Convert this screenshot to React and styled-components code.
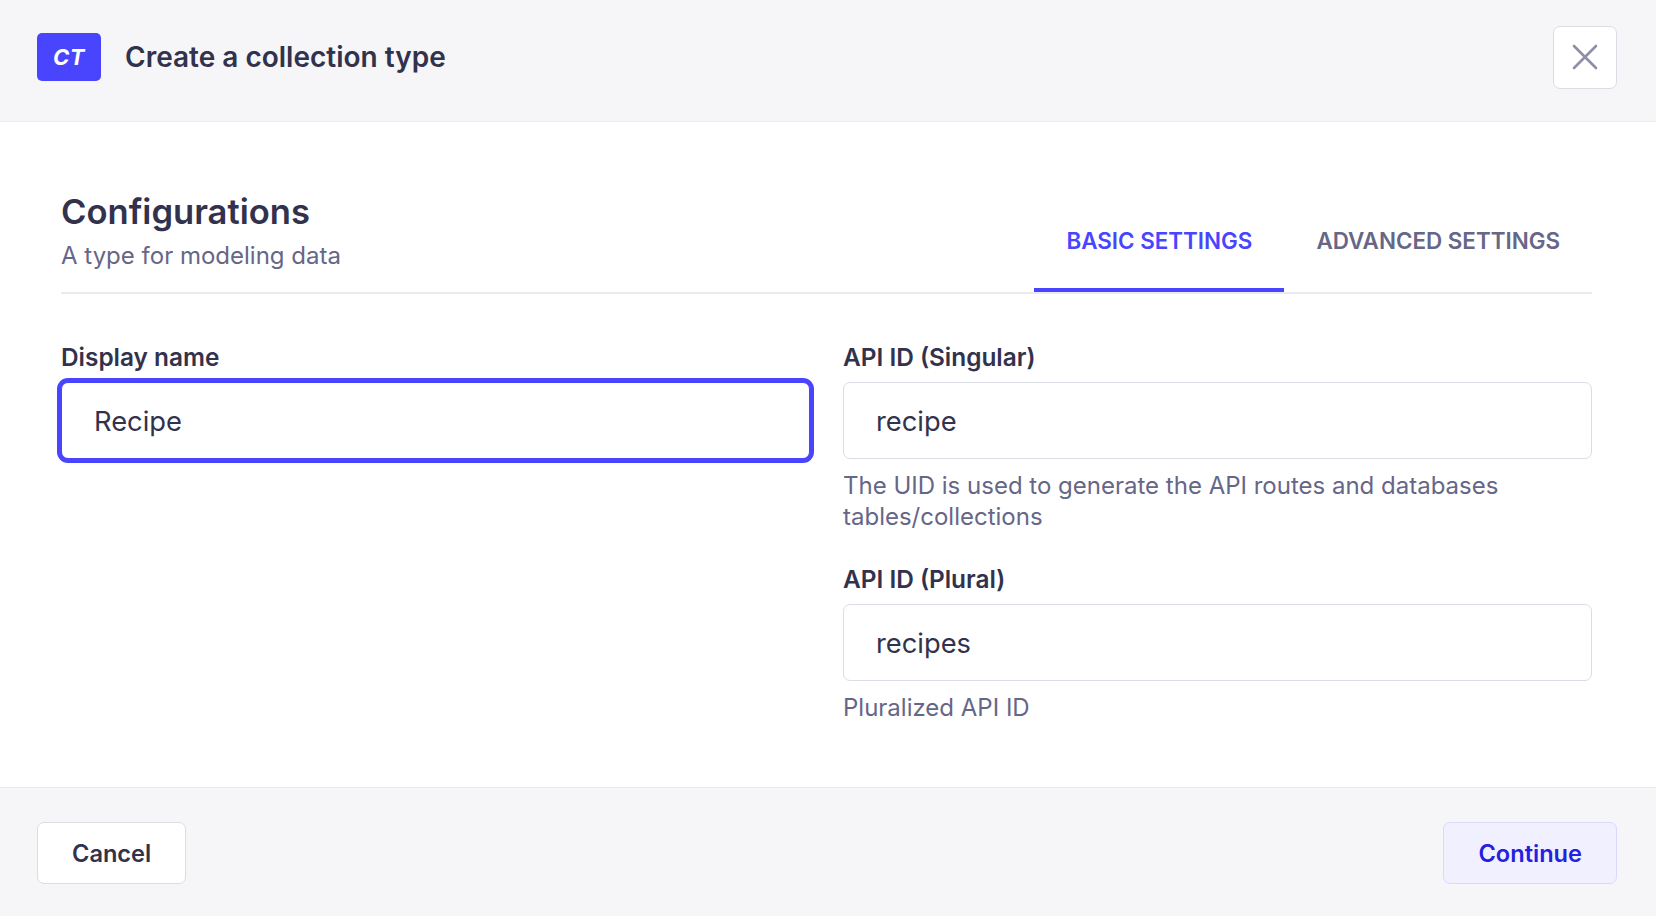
import styled, { createGlobalStyle } from "styled-components";

const colors = {
  primary: "#4945ff",
  primaryDark: "#271fe0",
  primaryLight: "#f0f0ff",
  primaryBorder: "#d9d8ff",
  text: "#32324d",
  muted: "#666687",
  icon: "#8e8ea9",
  border: "#dcdce4",
  divider: "#eaeaef",
  panel: "#f6f6f9",
  white: "#ffffff",
};

const GlobalStyle = createGlobalStyle`
  html, body {
    margin: 0;
    padding: 0;
    background: ${colors.white};
    font-family: Inter, "Noto Sans", "Liberation Sans", sans-serif;
    color: ${colors.text};
  }
  * { box-sizing: border-box; }
`;

const Modal = styled.div`
  width: 1656px;
  height: 916px;
  display: flex;
  flex-direction: column;
  background: ${colors.white};
`;

const Header = styled.header`
  height: 122px;
  display: flex;
  align-items: center;
  justify-content: space-between;
  padding: 25px 39px 32px 37px;
  background: ${colors.panel};
  border-bottom: 1px solid ${colors.divider};
`;

const TitleGroup = styled.div`
  display: flex;
  align-items: center;
  gap: 24px;
`;

const Badge = styled.div`
  width: 64px;
  height: 48px;
  border-radius: 5px;
  background: ${colors.primary};
  color: ${colors.white};
  display: flex;
  align-items: center;
  justify-content: center;
  font-size: 22px;
  font-weight: 700;
  font-style: italic;
  letter-spacing: 0.5px;
`;

const Title = styled.h1`
  margin: 0;
  font-size: 28px;
  font-weight: 600;
  color: ${colors.text};
`;

const CloseButton = styled.button`
  width: 64px;
  height: 63px;
  border-radius: 7px;
  border: 1px solid ${colors.border};
  background: ${colors.white};
  display: flex;
  align-items: center;
  justify-content: center;
  padding: 0;
  cursor: pointer;
`;

const Body = styled.main`
  flex: 1;
  padding: 68px 64px 0 61px;
`;

const TopRow = styled.div`
  display: flex;
  justify-content: space-between;
  align-items: flex-end;
  border-bottom: 2px solid ${colors.divider};
`;

const Intro = styled.div`
  padding-bottom: 22px;
`;

const Heading = styled.h2`
  margin: 0;
  font-size: 34.6px;
  line-height: 42px;
  font-weight: 600;
  color: ${colors.text};
`;

const Subtitle = styled.p`
  margin: 10px 0 0;
  font-size: 24px;
  line-height: 28px;
  color: ${colors.muted};
`;

const Tabs = styled.div`
  display: flex;
`;

const Tab = styled.button`
  background: none;
  border: none;
  border-bottom: 4px solid ${(p) => (p.$active ? colors.primary : "transparent")};
  padding: 0 32px 34px 32px;
  font-family: inherit;
  font-size: 22.4px;
  line-height: 26px;
  font-weight: 600;
  text-transform: uppercase;
  color: ${(p) => (p.$active ? colors.primary : colors.muted)};
  cursor: pointer;
`;

const FormGrid = styled.div`
  display: grid;
  grid-template-columns: 1fr 1fr;
  column-gap: 33px;
  padding-top: 49px;
  align-items: start;
`;

const Column = styled.div`
  display: flex;
  flex-direction: column;
  gap: 33px;
`;

const Field = styled.div`
  display: flex;
  flex-direction: column;
  gap: 11px;
`;

const Label = styled.label`
  font-size: 24.4px;
  line-height: 28px;
  font-weight: 600;
  color: ${colors.text};
`;

const Input = styled.input`
  height: 77px;
  width: 100%;
  padding: 2px 32px 0;
  border-radius: 7px;
  border: 1px solid ${(p) => (p.$focused ? colors.primary : colors.border)};
  box-shadow: ${(p) => (p.$focused ? `0 0 0 4px ${colors.primary}` : "none")};
  font-family: inherit;
  font-size: 27.3px;
  line-height: 34px;
  color: ${colors.text};
  background: ${colors.white};
  outline: none;
`;

const Hint = styled.p`
  margin: 0;
  font-size: 24px;
  line-height: 31px;
  color: ${colors.muted};
`;

const Footer = styled.footer`
  display: flex;
  justify-content: space-between;
  align-items: center;
  padding: 34px 39px 32px 37px;
  background: ${colors.panel};
  border-top: 1px solid ${colors.divider};
`;

const Button = styled.button`
  height: 62px;
  padding: 0 34px;
  border-radius: 7px;
  font-family: inherit;
  font-size: 23.6px;
  font-weight: 600;
  cursor: pointer;
  border: 1px solid ${(p) => (p.$primary ? colors.primaryBorder : colors.border)};
  background: ${(p) => (p.$primary ? colors.primaryLight : colors.white)};
  color: ${(p) => (p.$primary ? colors.primaryDark : colors.text)};
`;

function CloseIcon() {
  return (
    <svg width="26" height="26" viewBox="0 0 26 26" fill="none">
      <path
        d="M2 2L24 24M24 2L2 24"
        stroke={colors.icon}
        strokeWidth="2.6"
        strokeLinecap="round"
      />
    </svg>
  );
}

export default function App() {
  return (
    <>
      <GlobalStyle />
      <Modal>
        <Header>
          <TitleGroup>
            <Badge>CT</Badge>
            <Title>Create a collection type</Title>
          </TitleGroup>
          <CloseButton aria-label="Close">
            <CloseIcon />
          </CloseButton>
        </Header>
        <Body>
          <TopRow>
            <Intro>
              <Heading>Configurations</Heading>
              <Subtitle>A type for modeling data</Subtitle>
            </Intro>
            <Tabs>
              <Tab $active>Basic settings</Tab>
              <Tab>Advanced settings</Tab>
            </Tabs>
          </TopRow>
          <FormGrid>
            <Column>
              <Field>
                <Label>Display name</Label>
                <Input $focused defaultValue="Recipe" />
              </Field>
            </Column>
            <Column>
              <Field>
                <Label>API ID (Singular)</Label>
                <Input defaultValue="recipe" />
                <Hint>
                  The UID is used to generate the API routes and databases
                  tables/collections
                </Hint>
              </Field>
              <Field>
                <Label>API ID (Plural)</Label>
                <Input defaultValue="recipes" />
                <Hint>Pluralized API ID</Hint>
              </Field>
            </Column>
          </FormGrid>
        </Body>
        <Footer>
          <Button>Cancel</Button>
          <Button $primary>Continue</Button>
        </Footer>
      </Modal>
    </>
  );
}
